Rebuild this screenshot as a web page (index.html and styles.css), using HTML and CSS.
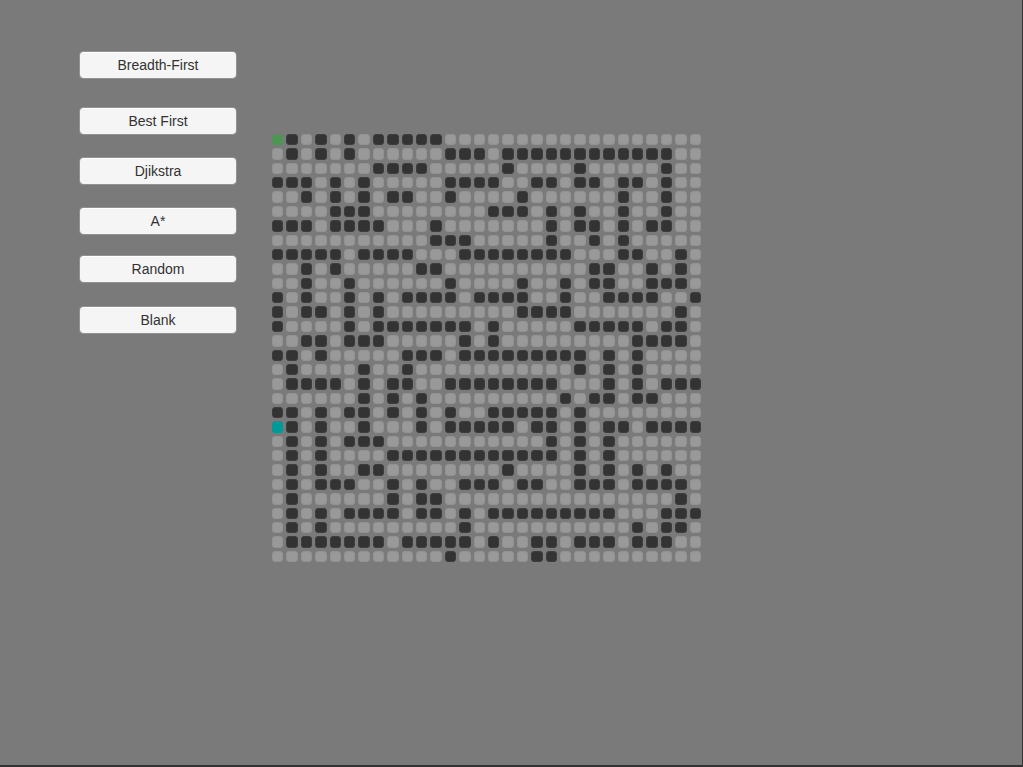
FILE: index.html
```html
<!DOCTYPE html>
<html lang="en">
<head>
<meta charset="utf-8">
<title>Pathfinding</title>
<link rel="stylesheet" href="styles.css">
</head>
<body>
<main class="scene">
  <nav class="menu" aria-label="Algorithms">
    <button class="menu-button" type="button">Breadth-First</button>
    <button class="menu-button gap-large" type="button">Best First</button>
    <button class="menu-button" type="button">Djikstra</button>
    <button class="menu-button" type="button">A*</button>
    <button class="menu-button gap-small" type="button">Random</button>
    <button class="menu-button" type="button">Blank</button>
  </nav>
  <section class="board" id="board" aria-label="Maze"></section>
</main>
<script src="board.js"></script>
</body>
</html>
```
FILE: styles.css
```css
* {
  box-sizing: border-box;
}

body {
  margin: 0;
  background: #7a7a7a;
  font-family: "Liberation Sans", Arial, sans-serif;
}

.scene {
  display: flex;
  align-items: flex-start;
  gap: 35px;
  min-height: 100vh;
  padding: 51px 24px 24px 79px;
  border-right: 1px solid #333;
  border-bottom: 2px solid #333;
}

.menu {
  display: flex;
  flex-direction: column;
  flex: none;
  width: 158px;
}

.menu-button {
  height: 28px;
  margin: 0 0 22px;
  padding: 0;
  border: 1px solid #929292;
  border-radius: 4px;
  background: #f5f5f5;
  background-clip: padding-box;
  box-shadow: inset 0 1px 0 #fff;
  color: #323232;
  font-family: inherit;
  font-size: 14px;
  line-height: 20px;
}

.gap-large {
  margin-top: 6px;
}

.gap-small {
  margin-top: -2px;
  margin-bottom: 23px;
}

.board {
  display: grid;
  grid-template-columns: repeat(30, 1fr);
  grid-auto-rows: 1fr;
  column-gap: 3px;
  row-gap: 3px;
  flex: 0 1 429px;
  aspect-ratio: 429 / 428;
  margin-top: 83px;
}

.cell {
  min-height: 0;
  border: 1px solid #929292;
  border-radius: 3px;
  background: #999;
}

.wall {
  border-color: #3d3d3d;
  background: #333;
}

.start {
  border-color: #539459;
  background: #4c9553;
}

.goal {
  border-color: #079696;
  background: #009999;
}
```
FILE: board.js
```js
const rows = [
  "S10101011111000000000000000000",
  "010101000000111011111111111100",
  "000000011110000010000100000100",
  "111010100000111100110110110100",
  "001010101100100001000000100100",
  "000011100000000111010100100100",
  "111011110001000000010110101100",
  "000000000001110000010010100000",
  "111110111100011111111000110010",
  "001010000011000000000011001010",
  "001001000000100001001011001110",
  "101001010111101111001001111001",
  "101101010000000001111000000010",
  "100001011111110100000111110110",
  "001101110000010100000000011110",
  "110100000111011111111101010000",
  "010000100100000000000101010000",
  "011110101100111111110001010111",
  "000000101010000000001011011000",
  "110101101010100111110100000000",
  "G10100100010111110110101101111",
  "010101110000000000010101000000",
  "010100001111111111110101000000",
  "010100110000000010000101010100",
  "010111001010011101100111011110",
  "010000001011000000000000000010",
  "010101111011010111111111000111",
  "010100000000010000000000010110",
  "011111110111110100110111011100",
  "000000000000100000110000000000"
];

const kinds = { "0": "", "1": " wall", S: " start", G: " goal" };
const board = document.getElementById("board");

for (const row of rows) {
  for (const mark of row) {
    const cell = document.createElement("div");
    cell.className = "cell" + kinds[mark];
    board.append(cell);
  }
}
```
